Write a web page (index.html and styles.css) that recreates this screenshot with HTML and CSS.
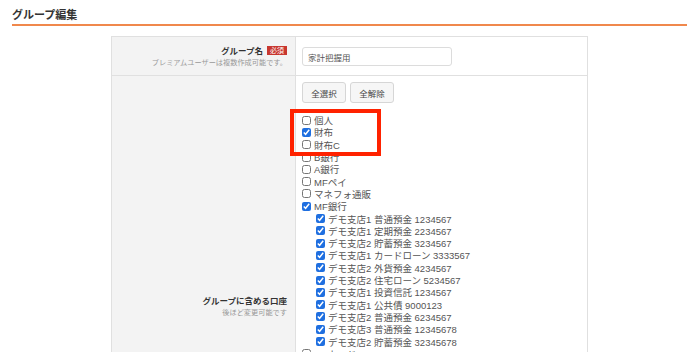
FILE: index.html
```html
<!DOCTYPE html>
<html lang="ja">
<head>
    <meta charset="UTF-8">
    <title>グループ編集</title>
    <link rel="stylesheet" href="styles.css">
</head>
<body>
    <div class="page">
        <h2 class="page-title">グループ編集</h2>

        <div class="form-table">
            <div class="form-row">
                <div class="form-label">
                    <div class="label-line"><span class="label-text">グループ名</span><span class="badge">必須</span></div>
                    <div class="label-note">プレミアムユーザーは複数作成可能です。</div>
                </div>
                <div class="form-field field-name">
                    <input type="text" class="text-input" value="家計把握用">
                </div>
            </div>

            <div class="form-row row-accounts">
                <div class="form-label">
                    <div class="label-line"><span class="label-text">グループに含める口座</span></div>
                    <div class="label-note">後ほど変更可能です</div>
                </div>
                <div class="form-field">
                    <div class="btn-group">
                        <button class="btn">全選択</button>
                        <button class="btn">全解除</button>
                    </div>
                    <div class="account-list">
                        <div class="highlight"></div>
                        <label class="account"><input type="checkbox">個人</label>
                        <label class="account"><input type="checkbox" checked>財布</label>
                        <label class="account"><input type="checkbox">財布C</label>
                        <label class="account"><input type="checkbox">B銀行</label>
                        <label class="account"><input type="checkbox">A銀行</label>
                        <label class="account"><input type="checkbox">MFペイ</label>
                        <label class="account"><input type="checkbox">マネフォ通販</label>
                        <label class="account"><input type="checkbox" checked>MF銀行</label>
                        <label class="account sub"><input type="checkbox" checked>デモ支店1 普通預金 1234567</label>
                        <label class="account sub"><input type="checkbox" checked>デモ支店1 定期預金 2234567</label>
                        <label class="account sub"><input type="checkbox" checked>デモ支店2 貯蓄預金 3234567</label>
                        <label class="account sub"><input type="checkbox" checked>デモ支店1 カードローン 3333567</label>
                        <label class="account sub"><input type="checkbox" checked>デモ支店2 外貨預金 4234567</label>
                        <label class="account sub"><input type="checkbox" checked>デモ支店2 住宅ローン 5234567</label>
                        <label class="account sub"><input type="checkbox" checked>デモ支店1 投資信託 1234567</label>
                        <label class="account sub"><input type="checkbox" checked>デモ支店1 公共債 9000123</label>
                        <label class="account sub"><input type="checkbox" checked>デモ支店2 普通預金 6234567</label>
                        <label class="account sub"><input type="checkbox" checked>デモ支店3 普通預金 12345678</label>
                        <label class="account sub"><input type="checkbox" checked>デモ支店2 貯蓄預金 32345678</label>
                        <label class="account"><input type="checkbox">MFカード</label>
                    </div>
                </div>
            </div>
        </div>
    </div>
</body>
</html>
```

FILE: styles.css
```css
body {
    margin: 0;
    background-color: #fff;
    color: #333;
    font-family: "Liberation Sans", "Noto Sans CJK JP", sans-serif;
}
.page {
    width: 675px;
    margin-left: 12px;
}
.page-title {
    margin: 0;
    padding: 7px 0 1px;
    font-size: 11px;
    line-height: 16px;
    font-weight: bold;
    color: #333;
    border-bottom: 2px solid #f0884c;
}
.form-table {
    width: 475px;
    margin: 10px auto 0;
    border: 1px solid #e0e0e0;
    border-bottom: none;
}
.form-row {
    display: grid;
    grid-template-columns: 184px 1fr;
    border-bottom: 1px solid #e0e0e0;
}
.form-label {
    display: flex;
    flex-direction: column;
    justify-content: center;
    align-items: flex-end;
    padding: 0 8px;
    background-color: #f3f3f3;
    border-right: 1px solid #e0e0e0;
}
.label-line {
    display: flex;
    align-items: center;
}
.label-text {
    font-size: 8.5px;
    line-height: 12px;
    font-weight: bold;
    color: #333;
}
.badge {
    margin-left: 4px;
    padding: 0 3px;
    background-color: #c8372f;
    color: #fff;
    font-size: 7px;
    line-height: 9px;
}
.label-note {
    font-size: 7.2px;
    line-height: 11px;
    color: #999;
}
.form-field {
    padding: 6px 6px;
}
.field-name {
    padding: 10px 6px 9px;
}
.text-input {
    display: block;
    box-sizing: border-box;
    width: 150px;
    height: 19px;
    margin: 0;
    padding: 0 5px;
    border: 1px solid #dcdcdc;
    border-radius: 3px;
    font-family: inherit;
    font-size: 8.5px;
    color: #555;
}
.row-accounts {
    min-height: 460px;
}
.btn-group {
    display: flex;
    gap: 4px;
}
.btn {
    box-sizing: border-box;
    width: 44px;
    height: 21px;
    padding: 0;
    background-color: #f6f6f6;
    border: 1px solid #d6d6d6;
    border-radius: 3px;
    font-family: inherit;
    font-size: 8.5px;
    color: #444;
}
.account-list {
    position: relative;
    margin-top: 11px;
}
.account {
    display: flex;
    align-items: center;
    height: 12.3px;
    font-size: 9.5px;
    color: #555;
    white-space: nowrap;
}
.account.sub {
    padding-left: 14px;
}
.account input {
    width: 9px;
    height: 9px;
    margin: 0 3px 0 0;
    accent-color: #1f6fe0;
}
.highlight {
    position: absolute;
    left: -12px;
    top: -5px;
    box-sizing: border-box;
    width: 91px;
    height: 47px;
    border: 4px solid #ff2200;
}
```
